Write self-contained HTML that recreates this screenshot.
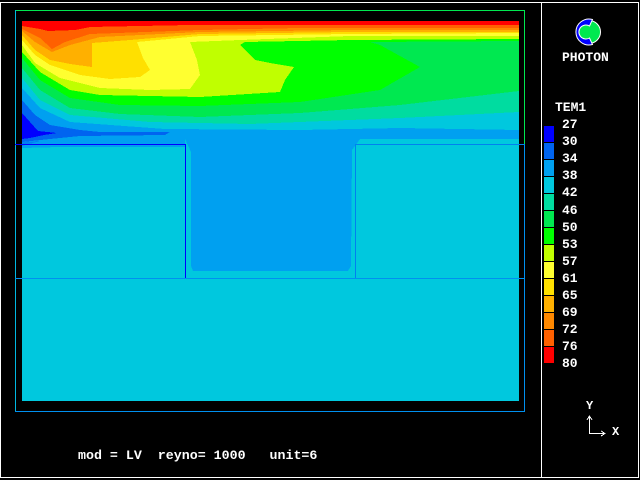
<!DOCTYPE html>
<html><head><meta charset="utf-8"><style>
html,body{margin:0;padding:0;background:#000;width:640px;height:480px;overflow:hidden}
svg{display:block}
text{font-family:"Liberation Mono",monospace;font-weight:bold;fill:#fff}
</style></head><body>
<svg width="640" height="480" viewBox="0 0 640 480" xmlns="http://www.w3.org/2000/svg" shape-rendering="crispEdges">
<rect width="640" height="480" fill="#000"/>
<rect x="0.5" y="2.5" width="638" height="475" fill="none" stroke="#fff" stroke-width="1"/>
<line x1="541.5" y1="2" x2="541.5" y2="478" stroke="#fff"/>

<rect x="22" y="139" width="497" height="262" fill="#00c8de"/>
<rect x="22" y="21" width="497" height="118" fill="#00a0f0"/>
<polygon points="22,139 185,139 185,147 120,147 60,147 22,148" fill="#00a0f0"/>
<polygon points="22,142 40,141 22,146" fill="#0080f0"/>
<polygon points="185,139 360,139 352,150 351,266 348,271 193,271 191,266 191,152" fill="#00a0f0"/>

<polygon points="22,21 519,21 519,130 400,128 300,130 165,129 70,122 40,108 22,88" fill="#00c8de"/>
<polygon points="22,21 519,21 519,112 400,118 250,124 150,122 70,115 40,100 22,78" fill="#00dca0"/>
<polygon points="22,21 519,21 519,91 400,105 300,113 200,117 120,114 70,108 40,90 22,68" fill="#00e850"/>
<polygon points="22,21 519,21 519,41 370,42 380,45 420,67 380,90 300,102 200,106 120,105 70,98 40,80 22,58" fill="#00ff00"/>
<polygon points="22,21 519,21 519,39 350,40 245,42 240,45 255,60 270,63 294,67 285,80 280,92 200,97 100,95 70,90 40,72 22,52" fill="#c0ff00"/>
<polygon points="22,21 519,21 519,36 350,36 240,40 190,42 197,60 200,75 190,89 150,90 100,88 60,78 35,63 22,45" fill="#ffff30"/>
<polygon points="22,21 519,21 519,33 350,34 200,36 137,42 143,58 150,70 140,77 110,79 80,75 50,65 35,55 22,40" fill="#ffe000"/>
<polygon points="22,21 519,21 519,32 350,32 200,34 130,40 92,43 92,67 70,64 50,60 35,50 22,35" fill="#ffb000"/>
<polygon points="22,21 519,21 519,30 350,30 200,32 100,37 70,45 52,52 35,42 22,31" fill="#ff8800"/>
<polygon points="22,21 519,21 519,28 300,28 200,30 90,34 65,42 52,49 40,38 22,29" fill="#ff6000"/>
<polygon points="22,21 519,21 519,25 190,25 90,27 75,30 48,31 40,29 22,26" fill="#ff0000"/>
<polygon points="22,100 35,115 50,125 80,130 100,132 170,132 165,135 80,136 50,139 22,142" fill="#0064f0"/>
<polygon points="22,113 30,122 38,131 57,133 44,135 30,138 22,139" fill="#0000ff"/>

<line x1="15" y1="10.5" x2="525" y2="10.5" stroke="#00e850"/>
<line x1="15.5" y1="10" x2="15.5" y2="412" stroke="#00b8e0"/>
<line x1="524.5" y1="10" x2="524.5" y2="144" stroke="#00e850"/>
<line x1="524.5" y1="144" x2="524.5" y2="412" stroke="#0090f0"/>
<line x1="15" y1="144.5" x2="185" y2="144.5" stroke="#0000ff"/>
<line x1="185.5" y1="144" x2="185.5" y2="278" stroke="#0000ff"/>
<line x1="355" y1="144.5" x2="525" y2="144.5" stroke="#0080f0"/>
<line x1="355.5" y1="144" x2="355.5" y2="278" stroke="#0080f0"/>
<line x1="15" y1="278.5" x2="525" y2="278.5" stroke="#0090f0"/>
<line x1="15" y1="411.5" x2="525" y2="411.5" stroke="#0090f0"/>

<!-- logo -->
<g shape-rendering="auto">
<circle cx="589" cy="32" r="11.5" fill="#00e850" stroke="#fff" stroke-width="1"/>
<path d="M592.5,19.5 A13,13 0 1 0 592.5,44.5 L589.5,38 A7,7 0 1 1 589.5,26 Z" fill="#0000ff" stroke="#fff" stroke-width="1"/>
</g>
<text x="562" y="61" font-size="13">PHOTON</text>

<text x="555" y="111" font-size="13">TEM1</text>
<g>
<rect x="544" y="126" width="10" height="16" fill="#0000ff"/>
<rect x="544" y="143" width="10" height="16" fill="#0064f0"/>
<rect x="544" y="160" width="10" height="16" fill="#00a0f0"/>
<rect x="544" y="177" width="10" height="16" fill="#00c8de"/>
<rect x="544" y="194" width="10" height="16" fill="#00dca0"/>
<rect x="544" y="211" width="10" height="16" fill="#00e850"/>
<rect x="544" y="228" width="10" height="16" fill="#00ff00"/>
<rect x="544" y="245" width="10" height="16" fill="#c0ff00"/>
<rect x="544" y="262" width="10" height="16" fill="#ffff30"/>
<rect x="544" y="279" width="10" height="16" fill="#ffe000"/>
<rect x="544" y="296" width="10" height="16" fill="#ffb000"/>
<rect x="544" y="313" width="10" height="16" fill="#ff8800"/>
<rect x="544" y="330" width="10" height="16" fill="#ff6000"/>
<rect x="544" y="347" width="10" height="16" fill="#ff0000"/>
</g>
<g font-size="13">
<text x="562" y="128">27</text>
<text x="562" y="145">30</text>
<text x="562" y="162">34</text>
<text x="562" y="179">38</text>
<text x="562" y="196">42</text>
<text x="562" y="214">46</text>
<text x="562" y="231">50</text>
<text x="562" y="248">53</text>
<text x="562" y="265">57</text>
<text x="562" y="282">61</text>
<text x="562" y="299">65</text>
<text x="562" y="316">69</text>
<text x="562" y="333">72</text>
<text x="562" y="350">76</text>
<text x="562" y="367">80</text>
</g>

<text x="586" y="409" font-size="12">Y</text>
<path d="M589.5,417 V433.5 H604" fill="none" stroke="#fff"/>
<path d="M587,420 L589.5,416 L592,420 M601,431 L605,433.5 L601,436" fill="none" stroke="#fff"/>
<text x="612" y="435" font-size="12">X</text>

<text x="78" y="459" font-size="13.3" xml:space="preserve">mod = LV  reyno= 1000   unit=6</text>
</svg>
</body></html>
